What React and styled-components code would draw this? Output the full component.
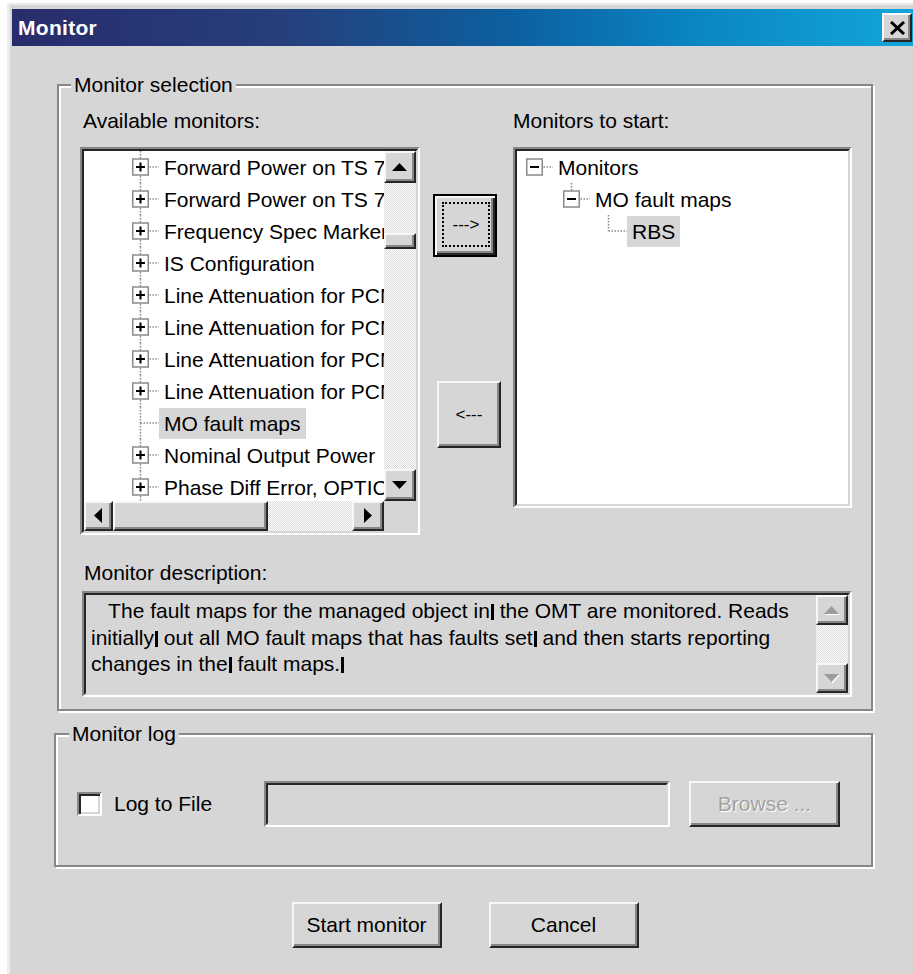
import React from "react";
import styled, { createGlobalStyle, css } from "styled-components";

const FACE = "#d6d6d6";
const LIGHT = "#f7f7f7";
const SHADE = "#878787";
const DARK = "#262626";

const GlobalStyle = createGlobalStyle`
  html, body {
    margin: 0;
    background: #fff;
    overflow: hidden;
  }
  body {
    font-family: "Liberation Sans", Arial, sans-serif;
    font-size: 21px;
    color: #000;
  }
  * {
    box-sizing: border-box;
  }
`;

// classic 3D bevel used by buttons, scroll arrows and thumbs
const raised = css`
  background: ${FACE};
  border: 2px solid;
  border-color: ${LIGHT} ${DARK} ${DARK} ${LIGHT};
  box-shadow: inset -2px -2px 0 ${SHADE};
`;

const dither = css`
  background: repeating-conic-gradient(#dadada 0% 25%, #ffffff 0% 50%) 0 0 / 2px 2px;
`;

const Window = styled.div`
  margin: 3px 0 0 7px;
  width: 908px;
  height: 971px;
  padding: 4px 0 0 2px;
  border-top: 2px solid #ececec;
  border-left: 3px solid #ececec;
  background: ${FACE};
`;

const TitleBar = styled.div`
  display: flex;
  align-items: center;
  justify-content: space-between;
  height: 37px;
  padding: 0 3px 0 6px;
  background: linear-gradient(
    90deg,
    #292c6b 0%,
    #263f7c 30%,
    #0d5f9f 55%,
    #0a86c4 76%,
    #13a6da 100%
  );
`;

const Title = styled.span`
  color: #fff;
  font-weight: bold;
  font-size: 21px;
  letter-spacing: 0.3px;
`;

const CloseButton = styled.button`
  ${raised};
  width: 30px;
  height: 29px;
  padding: 0;
  display: flex;
  align-items: center;
  justify-content: center;
`;

const Main = styled.div`
  padding: 0 42px 0 45px;
`;

const Group = styled.fieldset`
  margin: ${(p) => p.$top}px 0 0 ${(p) => p.$shift || 0}px;
  padding: 0;
  min-width: 0;
  border: 2px solid ${SHADE};
  box-shadow: inset 2px 2px 0 #fff, 2px 2px 0 #fff;
`;

const Legend = styled.legend`
  margin-left: ${(p) => p.$indent}px;
  padding: 0 3px;
  line-height: 24px;
  background: ${FACE};
`;

const SelectionBody = styled.div`
  padding: 12px 19px 12px 21px;
`;

const Columns = styled.div`
  display: grid;
  grid-template-columns: 340px 1fr 339px;
  grid-template-rows: 24px auto;
  row-gap: 14px;
  align-items: start;
`;

const Caption = styled.div`
  line-height: 24px;
  padding-left: ${(p) => p.$indent || 0}px;
  margin-top: ${(p) => p.$top || 0}px;
  white-space: nowrap;
`;

// sunken edit / list frame: outer and inner bevel
const Field = styled.div`
  width: ${(p) => (p.$w ? `${p.$w}px` : "auto")};
  height: ${(p) => p.$h}px;
  margin: ${(p) => p.$mt || 0}px 0 0 ${(p) => p.$ml || 0}px;
  border: 2px solid;
  border-color: ${SHADE} #fff #fff ${SHADE};
`;

const FieldInner = styled.div`
  height: 100%;
  border: 2px solid;
  border-color: ${DARK} ${FACE} ${FACE} ${DARK};
  background: ${(p) => p.$bg || "#fff"};
  overflow: hidden;
`;

const ScrollPane = styled.div`
  display: grid;
  grid-template-columns: 1fr 32px;
  grid-template-rows: 1fr 30px;
  height: 100%;
`;

const TreeView = styled.div`
  overflow: hidden;
  background: #fff;
`;

const TreeRow = styled.div`
  display: flex;
  align-items: center;
  height: 32px;
  padding-left: ${(p) => p.$pad}px;
  white-space: nowrap;
`;

const Lines = styled.svg`
  flex: none;
  display: block;
`;

const NodeLabel = styled.span`
  padding: 0 5px;
  line-height: 31px;
  background: ${(p) => (p.$selected ? FACE : "transparent")};
`;

const VScroll = styled.div`
  display: flex;
  flex-direction: column;
`;

const HScroll = styled.div`
  display: flex;
`;

const ScrollButton = styled.div`
  ${raised};
  flex: none;
  width: ${(p) => p.$w || 32}px;
  height: ${(p) => p.$h || 30}px;
  display: flex;
  align-items: center;
  justify-content: center;
`;

const Track = styled.div`
  ${dither};
  flex: 1;
  display: flex;
  flex-direction: ${(p) => (p.$horizontal ? "row" : "column")};
`;

const Thumb = styled.div`
  ${raised};
  flex: none;
  width: ${(p) => (p.$horizontal ? `${p.$len}px` : "100%")};
  height: ${(p) => (p.$horizontal ? "100%" : `${p.$len}px`)};
  margin-top: ${(p) => p.$offset || 0}px;
`;

const Corner = styled.div`
  background: ${FACE};
`;

const Transfer = styled.div`
  display: flex;
  flex-direction: column;
  align-items: flex-start;
  padding: 47px 0 0 13px;
`;

const PushButton = styled.button`
  ${raised};
  width: ${(p) => p.$w}px;
  height: ${(p) => p.$h}px;
  margin: ${(p) => p.$mt || 0}px 0 0 ${(p) => p.$ml || 0}px;
  padding: 0;
  font: inherit;
  font-size: ${(p) => p.$size || 21}px;
  color: #000;
  display: flex;
  align-items: center;
  justify-content: center;
  white-space: nowrap;

  &:disabled {
    color: #a2a2a2;
    text-shadow: 1px 1px 0 #fff;
  }

  ${(p) =>
    p.$default &&
    css`
      border: 2px solid #000;
      box-shadow: inset 2px 2px 0 ${LIGHT}, inset -2px -2px 0 ${DARK},
        inset -4px -4px 0 ${SHADE};
      padding: 6px 5px 8px 7px;
    `}
`;

const FocusRing = styled.span`
  flex: 1;
  align-self: stretch;
  display: flex;
  align-items: center;
  justify-content: center;
  border: 2px dotted #000;
`;

const DescPane = styled.div`
  display: grid;
  grid-template-columns: 1fr 32px;
  height: 100%;
`;

const DescText = styled.div`
  padding: 3px 0 0 5px;
  line-height: 26.5px;
  white-space: pre;
  overflow: hidden;
`;

const Mark = styled.span`
  display: inline-block;
  width: 3px;
  height: 16px;
  margin-left: 1px;
  vertical-align: -2px;
  background: #000;
`;

const LogBody = styled.div`
  display: flex;
  align-items: center;
  padding: 35px 0 38px 21px;
`;

const CheckField = styled.label`
  display: flex;
  align-items: center;
  gap: 12px;
  width: 187px;
`;

const CheckBox = styled.span`
  flex: none;
  width: 25px;
  height: 24px;
  border: 2px solid;
  border-color: ${SHADE} #fff #fff ${SHADE};
  box-shadow: inset 2px 2px 0 ${DARK}, inset -2px -2px 0 ${FACE};
  background: #fff;
`;

const Actions = styled.div`
  display: flex;
  justify-content: center;
  gap: 47px;
  margin-top: 35px;
`;

const ARROWS = {
  up: "0,8 7.5,0 15,8",
  down: "0,0 7.5,8 15,0",
  left: "8,0 0,7.5 8,15",
  right: "0,0 8,7.5 0,15",
};

function Arrow({ dir, muted }) {
  const vertical = dir === "up" || dir === "down";
  const w = vertical ? 16 : 9;
  const h = vertical ? 9 : 16;
  return (
    <svg width={w} height={h} viewBox={`0 0 ${w} ${h}`}>
      {muted && (
        <polygon points={ARROWS[dir]} fill="#fff" transform="translate(1 1)" />
      )}
      <polygon points={ARROWS[dir]} fill={muted ? "#9c9c9c" : "#000"} />
    </svg>
  );
}

function CloseGlyph() {
  return (
    <svg width="17" height="14" viewBox="0 0 17 14">
      <path d="M2 1 L15 13 M15 1 L2 13" stroke="#000" strokeWidth="3" />
    </svg>
  );
}

// dotted tree guides plus the +/- expander box
function Connector({ box, up, down }) {
  const dots = { stroke: "#8a8a8a", strokeWidth: 1.5, strokeDasharray: "1.5 1.5" };
  return (
    <Lines width="27" height="32" viewBox="0 0 27 32">
      {up && <line x1="8.5" y1="0" x2="8.5" y2="16" {...dots} />}
      {down && <line x1="8.5" y1="16" x2="8.5" y2="32" {...dots} />}
      <line x1="8.5" y1="16" x2="27" y2="16" {...dots} />
      {box && (
        <g>
          <rect x="0.75" y="8" width="15.5" height="16" fill="#fff" stroke="#8a8a8a" strokeWidth="1.5" />
          <line x1="4" y1="16" x2="13" y2="16" stroke="#000" strokeWidth="2" />
          {box === "plus" && (
            <line x1="8.5" y1="11.5" x2="8.5" y2="20.5" stroke="#000" strokeWidth="2" />
          )}
        </g>
      )}
    </Lines>
  );
}

function TreeNode({ item, base }) {
  return (
    <TreeRow $pad={base + item.level * 37}>
      <Connector box={item.box} up={item.up} down={item.down} />
      <NodeLabel $selected={item.selected}>{item.label}</NodeLabel>
    </TreeRow>
  );
}

const sibling = (label, box = "plus", selected = false) => ({
  label,
  box,
  selected,
  level: 1,
  up: true,
  down: true,
});

const available = [
  sibling("Forward Power on TS 7"),
  sibling("Forward Power on TS 7"),
  sibling("Frequency Spec Markers"),
  sibling("IS Configuration"),
  sibling("Line Attenuation for PCM A"),
  sibling("Line Attenuation for PCM B"),
  sibling("Line Attenuation for PCM C"),
  sibling("Line Attenuation for PCM D"),
  sibling("MO fault maps", null, true),
  sibling("Nominal Output Power"),
  sibling("Phase Diff Error, OPTICAL"),
];

const selected = [
  { label: "Monitors", box: "minus", level: 0, up: false, down: false },
  { label: "MO fault maps", box: "minus", level: 1, up: true, down: false },
  { label: "RBS", box: null, level: 2, up: true, down: false, selected: true },
];

const description = [
  ["   The fault maps for the managed object in", " the OMT are monitored. Reads"],
  ["initially", " out all MO fault maps that has faults set", " and then starts reporting"],
  ["changes in the", " fault maps.", ""],
];

export default function App() {
  return (
    <>
      <GlobalStyle />
      <Window>
        <TitleBar>
          <Title>Monitor</Title>
          <CloseButton aria-label="Close">
            <CloseGlyph />
          </CloseButton>
        </TitleBar>

        <Main>
          <Group $top={27}>
            <Legend $indent={12}>Monitor selection</Legend>
            <SelectionBody>
              <Columns>
                <Caption $indent={3}>Available monitors:</Caption>
                <span />
                <Caption>Monitors to start:</Caption>

                <Field $w={340} $h={388}>
                  <FieldInner>
                    <ScrollPane>
                      <TreeView>
                        {available.map((item, i) => (
                          <TreeNode key={i} item={item} base={11} />
                        ))}
                      </TreeView>
                      <VScroll>
                        <ScrollButton $h={32}>
                          <Arrow dir="up" />
                        </ScrollButton>
                        <Track>
                          <Thumb $len={16} $offset={50} />
                        </Track>
                        <ScrollButton $h={32}>
                          <Arrow dir="down" />
                        </ScrollButton>
                      </VScroll>
                      <HScroll>
                        <ScrollButton $w={29}>
                          <Arrow dir="left" />
                        </ScrollButton>
                        <Track $horizontal>
                          <Thumb $horizontal $len={155} />
                        </Track>
                        <ScrollButton $w={32}>
                          <Arrow dir="right" />
                        </ScrollButton>
                      </HScroll>
                      <Corner />
                    </ScrollPane>
                  </FieldInner>
                </Field>

                <Transfer>
                  <PushButton $default $w={64} $h={63} $size={17}>
                    <FocusRing>---&gt;</FocusRing>
                  </PushButton>
                  <PushButton $w={64} $h={67} $mt={124} $ml={4} $size={17}>
                    &lt;---
                  </PushButton>
                </Transfer>

                <Field $w={339} $h={361}>
                  <FieldInner>
                    <TreeView>
                      {selected.map((item, i) => (
                        <TreeNode key={i} item={item} base={9} />
                      ))}
                    </TreeView>
                  </FieldInner>
                </Field>
              </Columns>

              <Caption $indent={4} $top={26}>
                Monitor description:
              </Caption>
              <Field $h={106} $ml={2} $mt={6}>
                <FieldInner $bg={FACE}>
                  <DescPane>
                    <DescText>
                      {description.map((parts, i) => (
                        <div key={i}>
                          {parts.map((part, j) => (
                            <React.Fragment key={j}>
                              {j > 0 && <Mark />}
                              {part}
                            </React.Fragment>
                          ))}
                        </div>
                      ))}
                    </DescText>
                    <VScroll>
                      <ScrollButton $h={30}>
                        <Arrow dir="up" muted />
                      </ScrollButton>
                      <Track />
                      <ScrollButton $h={30}>
                        <Arrow dir="down" muted />
                      </ScrollButton>
                    </VScroll>
                  </DescPane>
                </FieldInner>
              </Field>
            </SelectionBody>
          </Group>

          <Group $top={11} $shift={-3}>
            <Legend $indent={13}>Monitor log</Legend>
            <LogBody>
              <CheckField>
                <CheckBox />
                Log to File
              </CheckField>
              <Field $w={406} $h={46}>
                <FieldInner $bg={FACE} />
              </Field>
              <PushButton $w={151} $h={46} $ml={19} disabled>
                Browse ...
              </PushButton>
            </LogBody>
          </Group>

          <Actions>
            <PushButton $w={150} $h={46}>
              Start monitor
            </PushButton>
            <PushButton $w={150} $h={46}>
              Cancel
            </PushButton>
          </Actions>
        </Main>
      </Window>
    </>
  );
}
